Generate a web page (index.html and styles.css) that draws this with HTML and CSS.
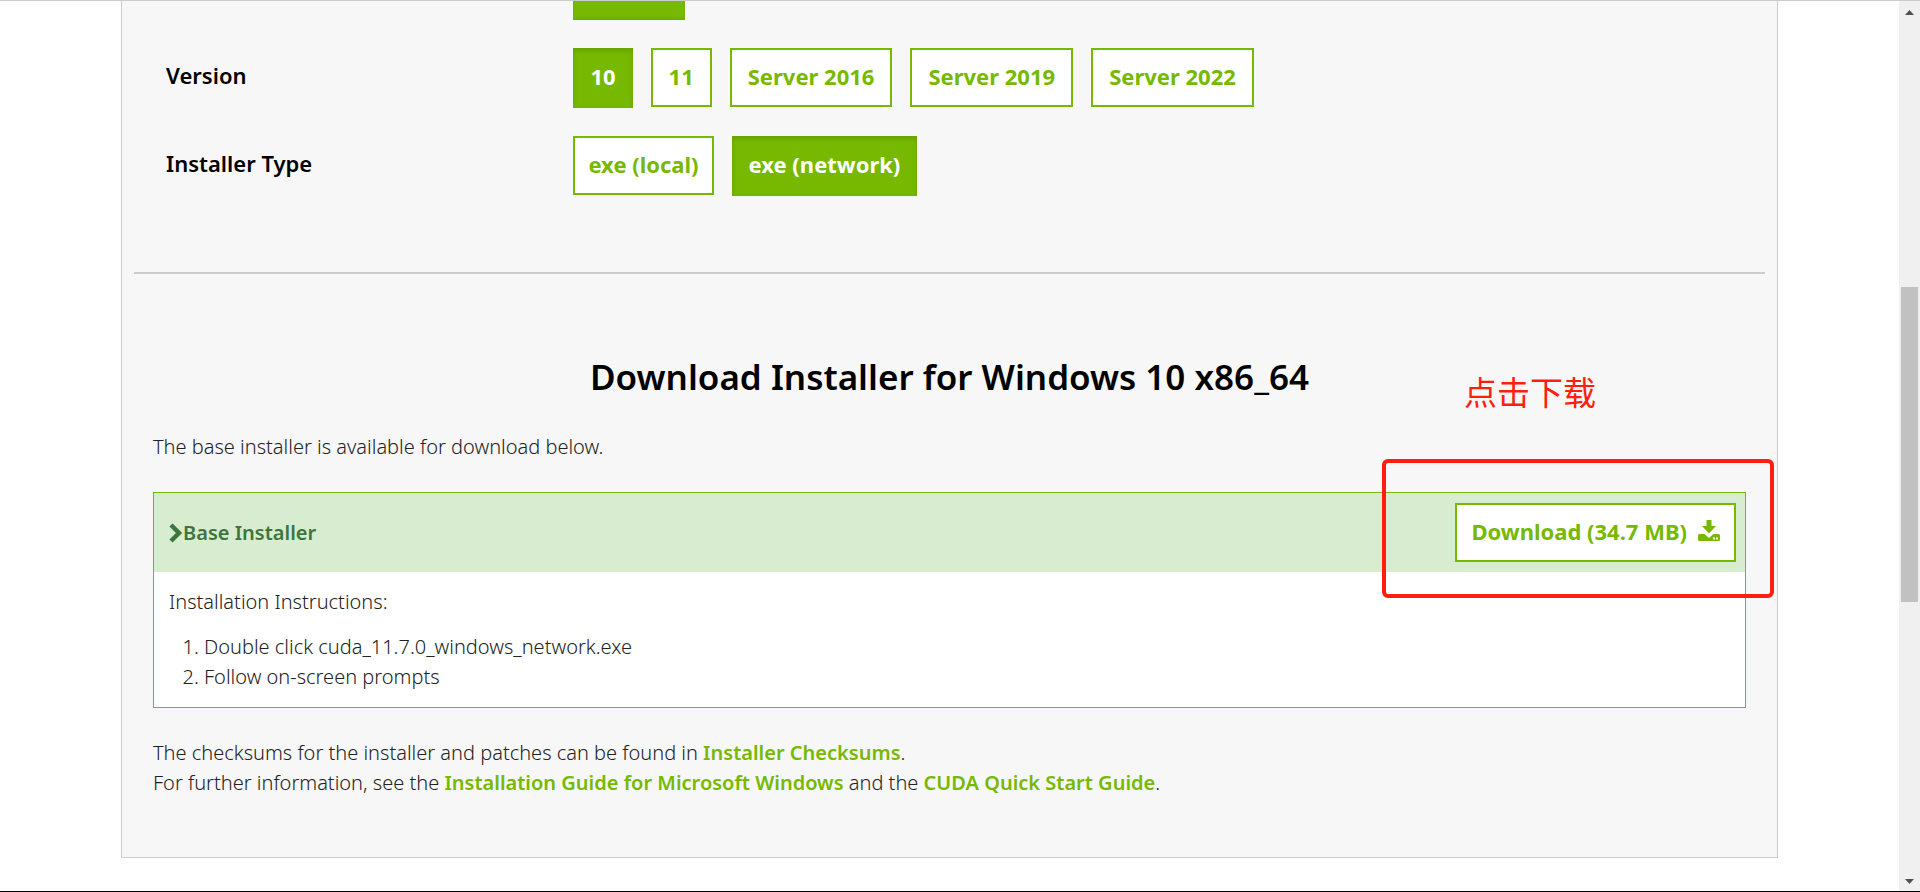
FILE: index.html
```html
<!DOCTYPE html>
<html lang="en">
<head>
<meta charset="utf-8">
<title>CUDA Toolkit Downloads</title>
<meta name="viewport" content="width=device-width, initial-scale=1">
<link rel="stylesheet" href="styles.css">
</head>
<body>
<div class="viewport">
  <main class="page">
    <section class="panel">
      <div class="selector">
        <div class="selector-row selector-row-cut">
          <div class="options"><button type="button" class="option option-active option-cut" aria-label="x86_64"></button></div>
        </div>
        <div class="selector-row" role="group" aria-labelledby="version-label">
          <h3 class="selector-label" id="version-label">Version</h3>
          <div class="options">
            <button type="button" class="option option-active" aria-pressed="true">10</button>
            <button type="button" class="option">11</button>
            <button type="button" class="option">Server 2016</button>
            <button type="button" class="option">Server 2019</button>
            <button type="button" class="option">Server 2022</button>
          </div>
        </div>
        <div class="selector-row" role="group" aria-labelledby="type-label">
          <h3 class="selector-label" id="type-label">Installer Type</h3>
          <div class="options">
            <button type="button" class="option option-tight">exe (local)</button>
            <button type="button" class="option option-active option-tight" aria-pressed="true">exe (network)</button>
          </div>
        </div>
      </div>
      <hr class="divider">
      <div class="download">
        <h2 class="title">Download Installer for Windows 10 x86_64</h2>
        <p class="text">The base installer is available for download below.</p>
        <article class="installer">
          <header class="installer-head">
            <h4 class="installer-name">
              <svg class="chevron" viewBox="0 0 14 20" aria-hidden="true"><path d="M2 2 10 10 2 18" fill="none" stroke="currentColor" stroke-width="4.500"/></svg>Base Installer</h4>
            <a class="download-button" href="#download">Download (34.7 MB)
              <svg class="download-icon" viewBox="0 0 22 22" aria-hidden="true"><path fill="currentColor" fill-rule="evenodd" d="M8.500 0h5v6h4.500l-7 7.500-7-7.500h4.500zM1.500 14h5l4.500 4 4.500-4h5q1.500 0 1.500 1.500v4q0 1.500-1.500 1.500h-19Q0 21 0 19.500v-4Q0 14 1.500 14zM15 17.500v2h2v-2zM18 17.500v2h2v-2z"/></svg>
            </a>
            <div class="callout">
              <span class="callout-text" lang="zh-CN">点击下载</span>
            </div>
          </header>
          <div class="installer-body">
            <p class="text">Installation Instructions:</p>
            <ol class="steps">
              <li>Double click cuda_11.7.0_windows_network.exe</li>
              <li>Follow on-screen prompts</li>
            </ol>
          </div>
        </article>
        <p class="text">The checksums for the installer and patches can be found in <a class="link" href="#checksums">Installer Checksums</a>.<br>
          For further information, see the <a class="link" href="#guide">Installation Guide for Microsoft Windows</a> and the <a class="link" href="#quick-start">CUDA Quick Start Guide</a>.</p>
      </div>
    </section>
  </main>
  <div class="scrollbar" aria-hidden="true">
    <svg class="scroll-arrow" viewBox="0 0 9 5"><path d="M0 5 4.500 0 9 5z"/></svg>
    <div class="scroll-track"><div class="scroll-thumb"></div></div>
    <svg class="scroll-arrow" viewBox="0 0 9 5"><path d="M0 0 4.500 5 9 0z"/></svg>
  </div>
</div>
</body>
</html>
```
FILE: styles.css
```css
* {
  box-sizing: border-box;
}

body {
  margin: 0;
  background: #fff;
  color: #222;
  font: 300 20px/30px "Noto Sans", sans-serif;
}

h2, h3, h4, p, ol {
  margin: 0;
}

.viewport {
  display: flex;
  min-height: 100vh;
  border-top: 1px solid #ccc;
  border-bottom: 1px solid #000;
}

.page {
  flex: 1;
  padding: 0 121px 32px;
}

.panel {
  padding: 0 12px 59px;
  background: #f7f7f7;
  border: 1px solid #ccc;
  border-top: 0;
}

.selector {
  display: grid;
  gap: 28px;
  padding: 0 32px 76px;
}

.selector-row {
  display: grid;
  grid-template-columns: 26% 1fr;
  align-items: start;
}

.selector-row-cut .options {
  grid-column: 2;
}

.selector-label {
  color: #000;
  font-size: 22px;
  font-weight: 600;
  line-height: 54px;
}

.options {
  display: flex;
  flex-wrap: wrap;
  gap: 18px;
}

.option {
  height: 59px;
  padding: 0 16px 4px;
  border: 2px solid #76b900;
  background: #fff;
  color: #76b900;
  font: 700 22px/28px "Noto Sans", sans-serif;
}

.option-tight {
  padding-right: 13px;
  padding-left: 13px;
}

.option-active {
  height: 60px;
  padding: 0 17px 4px;
  border: 0;
  background: #76b900;
  box-shadow: inset 0 3px 5px rgba(0, 0, 0, 0.125);
  color: #fff;
}

.option-cut {
  width: 112px;
  height: 19px;
  box-shadow: inset 0 -3px 5px -3px rgba(0, 0, 0, 0.15);
}

.divider {
  height: 2px;
  margin: 0;
  border: 0;
  background: #ccc;
}

.download {
  padding: 79px 19px 0;
}

.title {
  margin-bottom: 31px;
  color: #000;
  font-size: 35px;
  font-weight: 600;
  line-height: 48px;
  text-align: center;
}

.installer {
  margin: 30px 0;
  border: 1px solid #76b900;
  background: #fff;
}

.installer-head {
  position: relative;
  display: flex;
  align-items: center;
  justify-content: space-between;
  padding: 10px 9px 10px 15px;
  background: #d8ecd0;
}

.installer-name {
  display: flex;
  align-items: center;
  color: #3c763d;
  font-size: 20px;
  font-weight: 600;
}

.chevron {
  width: 14px;
  height: 20px;
}

.download-button {
  display: flex;
  align-items: center;
  gap: 11px;
  height: 59px;
  padding: 0 14px 4px;
  border: 2px solid #76b900;
  background: #fff;
  color: #76b900;
  font-size: 22px;
  font-weight: 700;
  text-decoration: none;
}

.download-icon {
  width: 22px;
  height: 22px;
}

.callout {
  position: absolute;
  top: -34px;
  right: -29px;
  width: 392px;
  height: 139px;
  border: 4px solid #ff1e10;
  border-radius: 6px;
  pointer-events: none;
}

.callout-text {
  position: absolute;
  left: 78px;
  bottom: 183px;
  color: #ff1e10;
  font: 400 33px/40px "Noto Sans CJK SC", sans-serif;
  white-space: nowrap;
}

.installer-body {
  padding: 15px;
}

.steps {
  padding: 15px 0 0 35px;
}

.link {
  color: #76b900;
  font-weight: 600;
  text-decoration: none;
}

.scrollbar {
  display: flex;
  flex: none;
  flex-direction: column;
  align-items: center;
  width: 21px;
  padding: 9px 0 7px;
  background: #f0f0f0;
}

.scroll-arrow {
  width: 9px;
  height: 5px;
  fill: #505050;
}

.scroll-track {
  flex: 1;
  padding-top: 272px;
}

.scroll-thumb {
  width: 17px;
  height: 315px;
  background: #c1c1c1;
}
```
